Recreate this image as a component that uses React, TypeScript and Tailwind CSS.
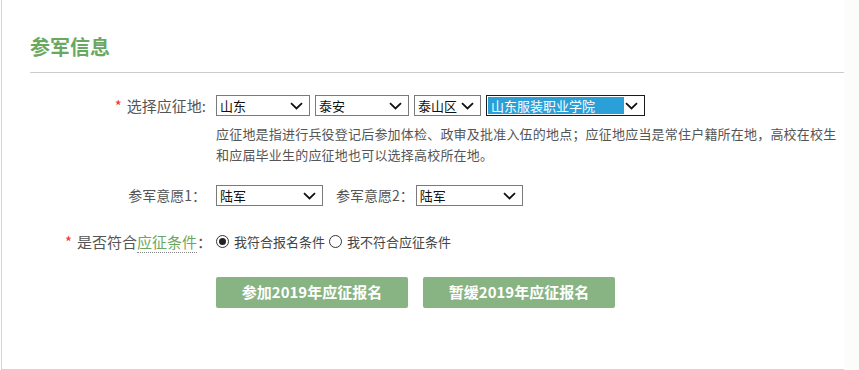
import React from "react"

function Chevron() {
  return (
    <svg width="13" height="8" viewBox="0 0 13 8" className="absolute right-[6px] top-[6px]">
      <path d="M1 1.2 L6.5 6.5 L12 1.2" fill="none" stroke="#111" strokeWidth="1.8" />
    </svg>
  )
}

function FakeSelect({ value, width, focused = false }: { value: string; width: string; focused?: boolean }) {
  return (
    <div
      className={`relative h-[21px] ${width} border ${focused ? "border-[#1a1a1a]" : "border-[#7a7a7a]"} bg-white text-[13px] leading-[19px] text-[#111]`}
    >
      {focused ? (
        <span className="absolute left-[1px] top-[1px] h-[17px] w-[136px] bg-[#2b9fd8] pl-[3px] leading-[17px] text-white">
          {value}
        </span>
      ) : (
        <span className="pl-[3px]">{value}</span>
      )}
      <Chevron />
    </div>
  )
}

function Radio({ checked }: { checked: boolean }) {
  return (
    <span className="flex h-[13px] w-[13px] items-center justify-center rounded-full border border-[#333] bg-white">
      {checked && <span className="h-[7px] w-[7px] rounded-full bg-[#222]" />}
    </span>
  )
}

export default function App() {
  return (
    <div className="flex h-[370px] w-[860px] bg-white font-['Noto_Sans_CJK_SC',sans-serif]">
      <div className="ml-px h-[370px] w-[843px] border-b border-l border-[#d4d4d4]">
        <div className="ml-[28px] h-[73px] border-b border-[#cccccc] pt-[33px]">
          <h2 className="text-[20px] font-bold leading-[28px] text-[#6aa862]">参军信息</h2>
        </div>

        <div className="mt-[22px] flex h-[21px] items-center">
          <div className="w-[204px] text-right text-[15px] leading-[21px] text-[#555]">
            <span className="mr-[5px] text-[#e33]">*</span>选择应征地:
          </div>
          <div className="ml-[10px] flex gap-[5px]">
            <FakeSelect value="山东" width="w-[94px]" />
            <FakeSelect value="泰安" width="w-[94px]" />
            <FakeSelect value="泰山区" width="w-[67px]" />
            <FakeSelect value="山东服装职业学院" width="w-[159px]" focused />
          </div>
        </div>

        <p className="ml-[214px] mt-[7px] whitespace-nowrap text-[13px] leading-[21px] tracking-[0.2px] text-[#555]">
          应征地是指进行兵役登记后参加体检、政审及批准入伍的地点；应征地应当是常住户籍所在地，高校在校生
          <br />
          和应届毕业生的应征地也可以选择高校所在地。
        </p>

        <div className="mt-[20px] flex h-[21px] items-center text-[14px] text-[#555]">
          <div className="w-[204px] text-right leading-[21px]">参军意愿1：</div>
          <div className="ml-[10px]">
            <FakeSelect value="陆军" width="w-[107px]" />
          </div>
          <div className="ml-[13px] leading-[21px]">参军意愿2：</div>
          <div className="ml-[2px]">
            <FakeSelect value="陆军" width="w-[107px]" />
          </div>
        </div>

        <div className="mt-[25px] flex h-[21px] items-center">
          <div className="w-[210px] text-right text-[15px] leading-[21px] text-[#555]">
            <span className="mr-[5px] text-[#e33]">*</span>是否符合
            <span className="border-b border-dotted border-[#888] text-[#6aa862]">应征条件</span>：
          </div>
          <label className="ml-[4px] flex items-center gap-[5px] text-[13px] text-[#444]">
            <Radio checked />
            我符合报名条件
          </label>
          <label className="ml-[4px] flex items-center gap-[5px] text-[13px] text-[#444]">
            <Radio checked={false} />
            我不符合应征条件
          </label>
        </div>

        <div className="ml-[214px] mt-[25px] flex gap-[15px]">
          <button className="h-[31px] w-[192px] rounded-[2px] bg-[#88b382] text-[15px] font-bold text-white">
            参加2019年应征报名
          </button>
          <button className="h-[31px] w-[192px] rounded-[2px] bg-[#88b382] text-[15px] font-bold text-white">
            暂缓2019年应征报名
          </button>
        </div>
      </div>
      <div className="h-[370px] w-[16px] border-r border-[#d4d4d4] bg-[#fcfcfa]" />
    </div>
  )
}
